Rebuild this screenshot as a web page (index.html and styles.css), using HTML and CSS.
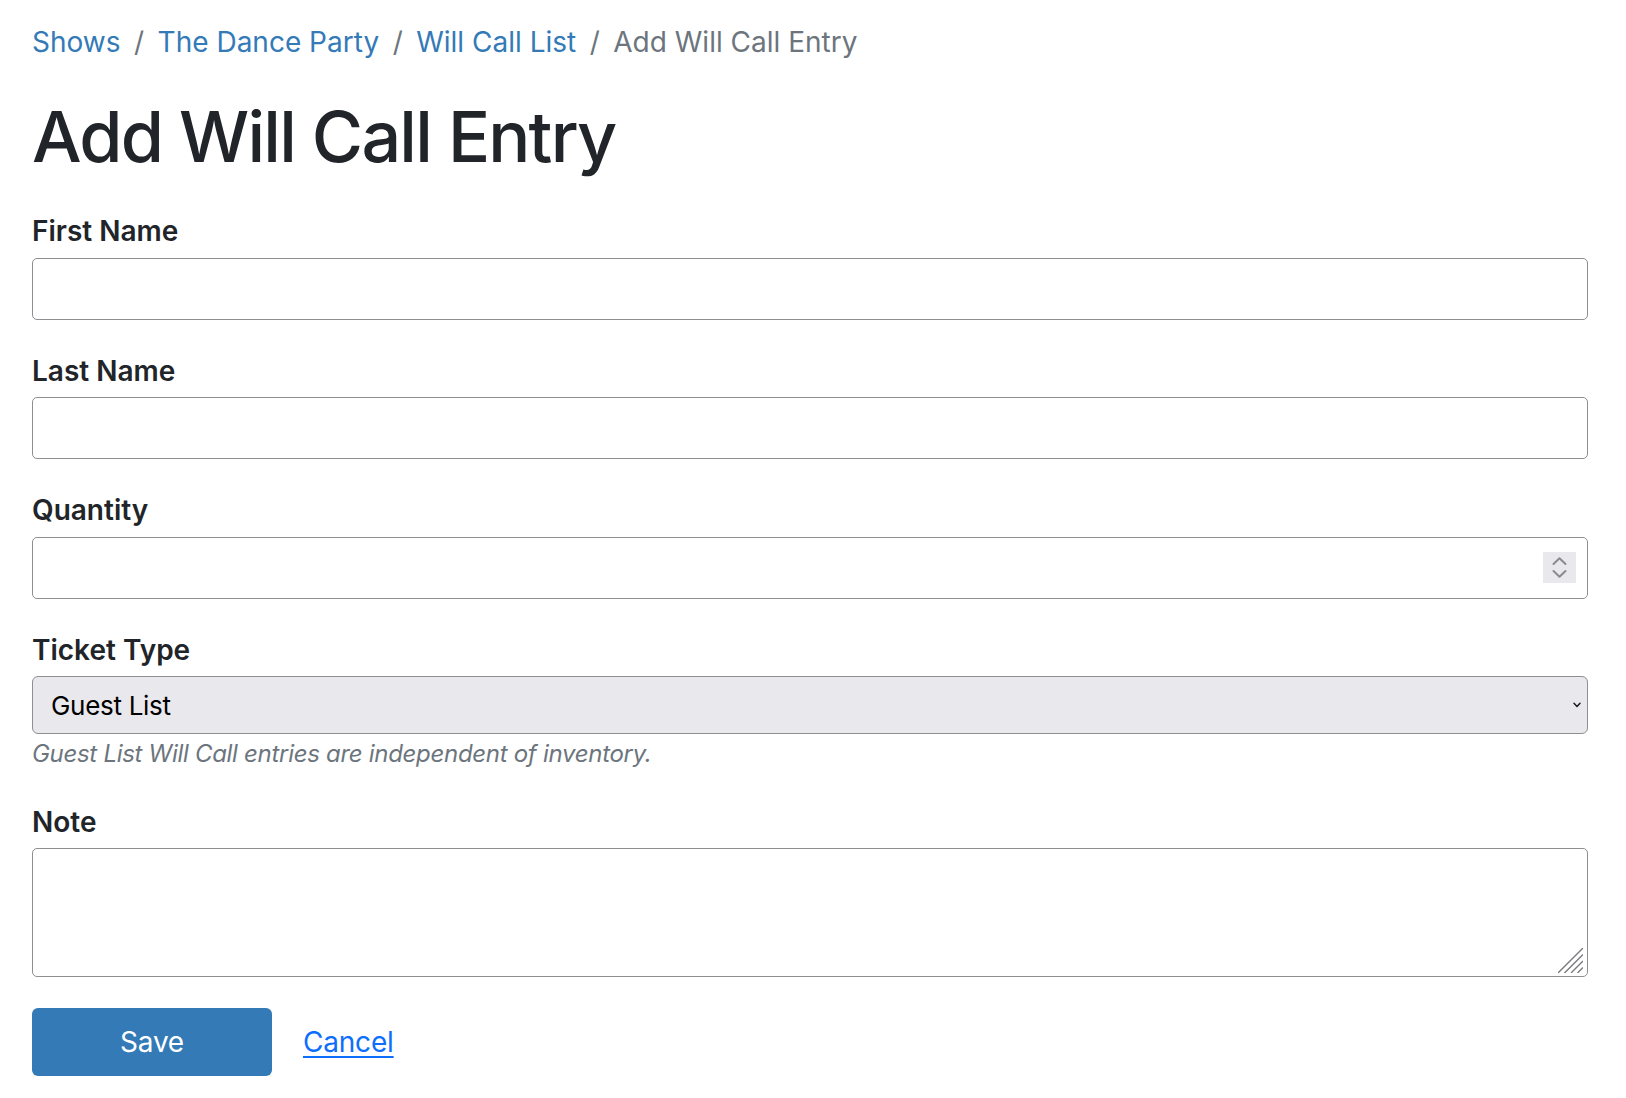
FILE: index.html
```html
<!DOCTYPE html>
<html lang="en">
<head>
<meta charset="utf-8">
<title>Add Will Call Entry</title>
<link rel="stylesheet" href="styles.css">
</head>
<body>
<main class="page">
  <nav class="breadcrumb">
    <a class="crumb-link" href="#">Shows</a><span class="sep">/</span><a class="crumb-link" href="#">The Dance Party</a><span class="sep">/</span><a class="crumb-link" href="#">Will Call List</a><span class="sep">/</span><span class="crumb-active">Add Will Call Entry</span>
  </nav>
  <h1 class="title">Add Will Call Entry</h1>
  <form class="form">
    <div class="field">
      <label class="label" for="first">First Name</label>
      <input class="control" id="first" type="text">
    </div>
    <div class="field">
      <label class="label" for="last">Last Name</label>
      <input class="control" id="last" type="text">
    </div>
    <div class="field">
      <label class="label" for="qty">Quantity</label>
      <div class="control-wrap">
        <input class="control" id="qty" type="text">
        <span class="spinner">
          <svg width="33" height="31" viewBox="0 0 33 31"><path d="M10.5 12 L16.5 6.2 L22.5 12 M10.5 19 L16.5 24.8 L22.5 19" fill="none" stroke="#8a8a8f" stroke-width="2" stroke-linecap="round" stroke-linejoin="round"/></svg>
        </span>
      </div>
    </div>
    <div class="field field-select">
      <label class="label" for="type">Ticket Type</label>
      <div class="control-wrap">
        <select class="select" id="type"><option>Guest List</option></select>
        <span class="select-arrow">
          <svg width="8" height="6" viewBox="0 0 8 6"><path d="M1 1.2 L4 4.4 L7 1.2" fill="none" stroke="#1d1d1f" stroke-width="1.5" stroke-linecap="round" stroke-linejoin="round"/></svg>
        </span>
      </div>
      <div class="help">Guest List Will Call entries are independent of inventory.</div>
    </div>
    <div class="field">
      <label class="label" for="note">Note</label>
      <div class="control-wrap">
        <textarea class="textarea" id="note"></textarea>
        <span class="resize">
          <svg width="25" height="25" viewBox="0 0 25 25"><path d="M25 0 L0 25 M25 6.5 L6.5 25 M25 13 L13 25 M25 19.5 L19.5 25" fill="none" stroke="#7a7a7e" stroke-width="1.4"/></svg>
        </span>
      </div>
    </div>
    <div class="actions">
      <button class="btn" type="button">Save</button>
      <a class="cancel" href="#">Cancel</a>
    </div>
  </form>
</main>
</body>
</html>
```
FILE: styles.css
```css
html, body {
  margin: 0;
  padding: 0;
  background: #ffffff;
}
body {
  font-family: Inter, "Liberation Sans", Arial, sans-serif;
  color: #212529;
}
.page {
  padding: 22px 38px 0 32px;
}
.breadcrumb {
  display: flex;
  align-items: baseline;
  font-size: 28px;
  line-height: 41px;
  letter-spacing: 0;
}
.crumb-link {
  color: #337ab7;
  text-decoration: none;
}
.sep {
  color: #6c757d;
  padding: 0 13.5px;
}
.crumb-active {
  color: #6c757d;
}
.title {
  margin: 34px 0 0 0;
  font-size: 70px;
  line-height: 80px;
  font-weight: 500;
  letter-spacing: -1.8px;
  color: #212529;
}
.form {
  margin: 36px 0 0 0;
}
.field {
  margin-bottom: 33px;
}
.field-select {
  margin-bottom: 34.5px;
}
.label {
  display: block;
  font-size: 28px;
  line-height: 36px;
  font-weight: 600;
  letter-spacing: 0;
  margin-bottom: 8.5px;
  color: #212529;
}
.control-wrap {
  position: relative;
}
.control {
  display: block;
  box-sizing: border-box;
  width: 100%;
  height: 62px;
  border: 1px solid #8e8e93;
  border-radius: 5px;
  background: #ffffff;
  padding: 0 18px;
  font-family: inherit;
  font-size: 26px;
  outline: none;
}
.spinner {
  position: absolute;
  right: 12px;
  top: 15px;
  width: 33px;
  height: 31px;
  background: #e8e8ed;
  display: block;
}
.spinner svg {
  display: block;
}
.select {
  display: block;
  box-sizing: border-box;
  width: 100%;
  height: 58px;
  border: 1px solid #8e8e93;
  border-radius: 6px;
  background: #e9e8ed;
  padding: 0 40px 0 18px;
  font-family: inherit;
  font-size: 26px;
  letter-spacing: -0.3px;
  color: #000000;
  -webkit-appearance: none;
  appearance: none;
  outline: none;
}
.select-arrow {
  position: absolute;
  right: 7px;
  top: 26px;
  width: 8px;
  height: 6px;
  pointer-events: none;
}
.select-arrow svg {
  display: block;
}
.help {
  margin-top: 5px;
  font-size: 24px;
  line-height: 30px;
  font-style: italic;
  color: #6c757d;
  letter-spacing: -0.3px;
}
.textarea {
  display: block;
  box-sizing: border-box;
  width: 100%;
  height: 128.5px;
  border: 1px solid #8e8e93;
  border-radius: 5px;
  background: #ffffff;
  resize: none;
  font-family: inherit;
  font-size: 26px;
  outline: none;
  margin: 0;
}
.resize {
  position: absolute;
  right: 5px;
  bottom: 4px;
  width: 25px;
  height: 25px;
  pointer-events: none;
}
.resize svg {
  display: block;
}
.actions {
  display: flex;
  align-items: center;
  gap: 31px;
  margin-top: -2px;
}
.btn {
  width: 240px;
  height: 68px;
  border: none;
  border-radius: 6px;
  background: #337ab7;
  color: #ffffff;
  font-family: inherit;
  font-size: 28px;
  font-weight: 400;
  letter-spacing: -0.2px;
  padding: 0;
}
.cancel {
  color: #0d6efd;
  font-size: 28px;
  letter-spacing: -0.2px;
  text-decoration: underline;
  text-underline-offset: 4px;
  text-decoration-thickness: 2px;
}
```
